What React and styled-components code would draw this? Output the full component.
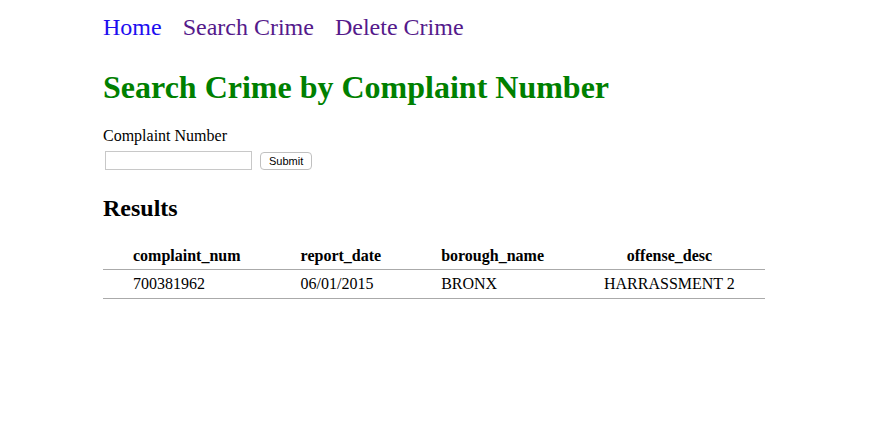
import styled, { createGlobalStyle } from "styled-components";

const GlobalStyle = createGlobalStyle`
  body {
    margin: 0;
    background: #fff;
    font-family: "Liberation Serif", "Times New Roman", serif;
    color: #000;
  }
`;

const App = () => {
  return (
    <>
      <GlobalStyle />
      <Page>
        <Nav>
          <NavLink href="#" $visited={false}>Home</NavLink>
          <NavLink href="#" $visited>Search Crime</NavLink>
          <NavLink href="#" $visited>Delete Crime</NavLink>
        </Nav>
        <Heading>Search Crime by Complaint Number</Heading>
        <Form onSubmit={(e) => e.preventDefault()}>
          <Label htmlFor="complaint">Complaint Number</Label>
          <Row>
            <Input id="complaint" type="text" />
            <Button type="submit">Submit</Button>
          </Row>
        </Form>
        <SubHeading>Results</SubHeading>
        <Table>
          <thead>
            <tr>
              <Th>complaint_num</Th>
              <Th>report_date</Th>
              <Th>borough_name</Th>
              <Th>offense_desc</Th>
            </tr>
          </thead>
          <tbody>
            <tr>
              <Td>700381962</Td>
              <Td>06/01/2015</Td>
              <Td>BRONX</Td>
              <Td>HARRASSMENT 2</Td>
            </tr>
          </tbody>
        </Table>
      </Page>
    </>
  );
};

export default App;

const Page = styled.div`
  padding: 13px 0 40px 103px;
`;

const Nav = styled.nav`
  display: flex;
  gap: 21px;
`;

const NavLink = styled.a`
  font-size: 24px;
  line-height: 28px;
  text-decoration: none;
  color: ${(p) => (p.$visited ? "#551a8b" : "#1d0ef0")};
`;

const Heading = styled.h1`
  margin: 28px 0 0;
  font-size: 32px;
  line-height: 37px;
  font-weight: bold;
  color: #008000;
`;

const Form = styled.form`
  margin-top: 21px;
`;

const Label = styled.label`
  display: block;
  font-size: 16px;
  line-height: 18px;
`;

const Row = styled.div`
  display: flex;
  align-items: center;
  gap: 8px;
  margin-top: 6px;
  padding-left: 2px;
`;

const Input = styled.input`
  box-sizing: border-box;
  width: 147px;
  height: 19px;
  margin: 0;
  padding: 1px 3px;
  border: 1px solid #c8c8c8;
  font-size: 12px;
  outline: none;
`;

const Button = styled.button`
  box-sizing: border-box;
  height: 18px;
  margin: 0;
  padding: 0 8px;
  border: 1px solid #c0c0c0;
  border-radius: 4px;
  background: #fff;
  font-family: "Liberation Sans", Arial, sans-serif;
  font-size: 11px;
  color: #000;
`;

const SubHeading = styled.h2`
  margin: 24px 0 0;
  font-size: 24px;
  line-height: 28px;
  font-weight: bold;
`;

const Table = styled.table`
  border-collapse: collapse;
  margin-top: 19px;
`;

const Th = styled.th`
  padding: 6px 30px 4px;
  font-size: 16px;
  line-height: 18px;
  font-weight: bold;
  text-align: center;
  border-bottom: 1px solid #aaa;
`;

const Td = styled.td`
  padding: 5px 30px 5px;
  font-size: 16px;
  line-height: 18px;
  text-align: left;
  border-bottom: 1px solid #aaa;
`;
